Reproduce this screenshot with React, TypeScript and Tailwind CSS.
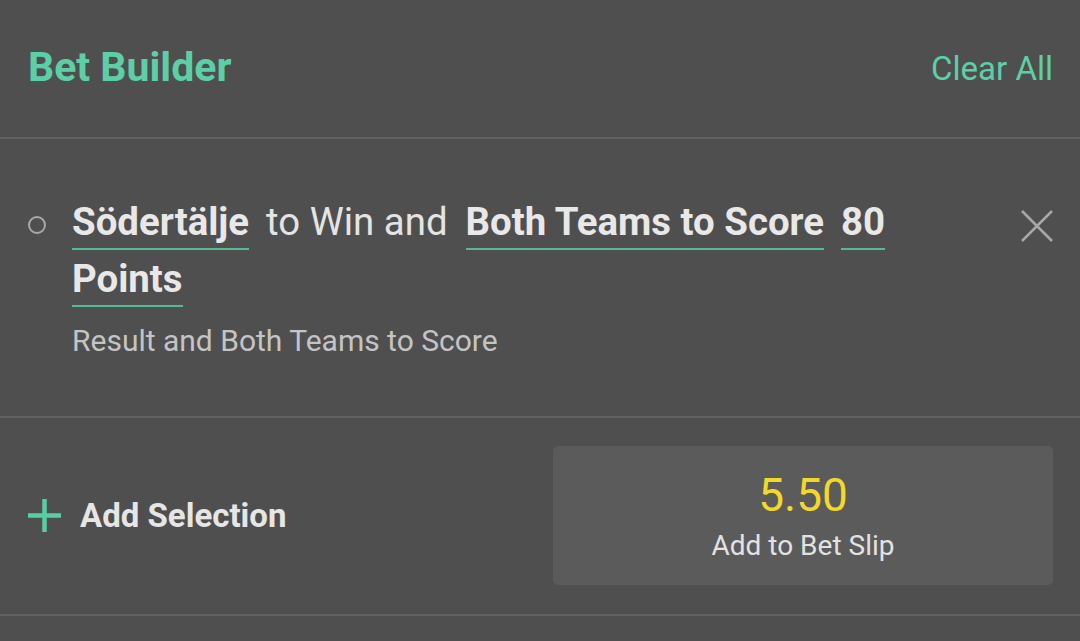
import React from 'react';

const Chip: React.FC<{ children: React.ReactNode }> = ({ children }) => (
  <span className="font-bold text-[#e8e8e8] border-b-2 border-[#56b994] pb-[4px]">{children}</span>
);

export default function App() {
  return (
    <div className="min-h-[641px] w-[1080px] bg-[#4f4f4f] overflow-hidden" style={{ fontFamily: 'Roboto, "Liberation Sans", sans-serif' }}>
      {/* header */}
      <div className="h-[139px] flex items-center justify-between pl-[28px] pr-[27px] pb-[3px] border-b-2 border-[#626262]">
        <h1 className="text-[41px] font-bold text-[#5ccfa6] leading-none">Bet Builder</h1>
        <button className="text-[33px] text-[#5ccfa6] leading-none mt-[2px]">Clear All</button>
      </div>

      {/* selection */}
      <div className="flex items-start pl-[28px] pr-[27px] pt-[54px] pb-[57px] border-b-2 border-[#626262]">
        <div className="w-[18px] h-[18px] mt-[23px] rounded-full border-2 border-[#a8a8a8] shrink-0" />
        <div className="ml-[26px] flex-1">
          <p className="text-[38.4px] leading-[57px] text-[#e4e4e4] pr-[70px]">
            <Chip>Södertälje</Chip>
            <span className="ml-[17px] mr-[18px]">to Win and</span>
            <Chip>Both Teams to Score</Chip>
            <span className="inline-block w-[17px]" />
            <Chip>80 Points</Chip>
          </p>
          <p className="mt-[16px] text-[30px] leading-[36px] text-[#c4c4c4]">Result and Both Teams to Score</p>
        </div>
        <svg className="w-[32px] h-[32px] mt-[17px] shrink-0" viewBox="0 0 32 32" fill="none" stroke="#a8a8a8" strokeWidth="2.5">
          <path d="M1 1 L31 31 M31 1 L1 31" />
        </svg>
      </div>

      {/* actions */}
      <div className="flex items-center justify-between pl-[28px] pr-[27px] pt-[28px] pb-[29px] border-b-2 border-[#626262]">
        <div className="flex items-center gap-[19px]">
          <svg className="w-[33px] h-[33px]" viewBox="0 0 33 33" fill="none" stroke="#56cfa2" strokeWidth="4.5">
            <path d="M16.5 0 V33 M0 16.5 H33" />
          </svg>
          <span className="text-[33px] font-bold text-[#e6e6e6]">Add Selection</span>
        </div>
        <button className="w-[500px] h-[139px] rounded-[5px] bg-[#5b5b5b] flex flex-col items-center justify-center">
          <span className="text-[46px] leading-[52px] text-[#f2d82b]">5.50</span>
          <span className="text-[28px] leading-[34px] text-[#e2e2e2] mt-[8px]">Add to Bet Slip</span>
        </button>
      </div>
    </div>
  );
}
